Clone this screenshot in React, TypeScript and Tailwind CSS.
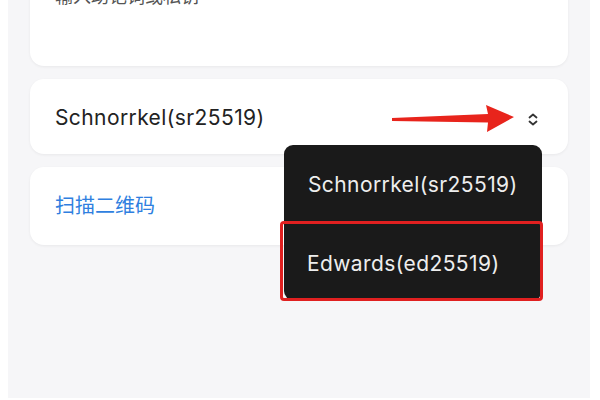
import React from "react";

const font = { fontFamily: "Inter, 'Noto Sans CJK SC', sans-serif" };

export default function App() {
  return (
    <div className="w-[600px] h-[400px] bg-white overflow-hidden relative" style={font}>
      <div className="mx-[8px] w-[582px] h-[398px] bg-[#f6f6f8] px-[22px] flex flex-col gap-[13px] overflow-hidden">
        <div className="-mt-[30px] h-[96px] bg-white rounded-[14px] shadow-[0_1px_3px_rgba(0,0,0,0.06)] px-[25px] pt-[16px]">
          <div className="text-[18px] leading-[22px] text-[#555]">输入助记词或私钥</div>
        </div>
        <div className="h-[75px] bg-white rounded-[14px] shadow-[0_1px_3px_rgba(0,0,0,0.06)] pl-[25px] pr-[30px] flex items-center justify-between">
          <span className="text-[21px] text-[#222] tracking-[0.4px] mt-[2px]">Schnorrkel(sr25519)</span>
          <svg width="10" height="13" viewBox="0 0 10 13" className="mt-[5px]">
            <path d="M1.5 4.5 L5 1.5 L8.5 4.5 M1.5 8.5 L5 11.5 L8.5 8.5" fill="none" stroke="#333" strokeWidth="1.8" strokeLinecap="round" strokeLinejoin="round" />
          </svg>
        </div>
        <div className="h-[78px] bg-white rounded-[14px] shadow-[0_1px_3px_rgba(0,0,0,0.06)] px-[25px] flex items-center">
          <span className="text-[20px] text-[#2f7fe0]">扫描二维码</span>
        </div>
      </div>

      <svg className="absolute left-[388px] top-[100px]" width="132" height="36" viewBox="0 0 132 36">
        <path d="M4 18 L100 14 L98 5 L126 17 L99 32 L100 22.5 L4 21 Z" fill="#e8241c" />
      </svg>

      <div className="absolute left-[284px] top-[145px] w-[258px] h-[155px] bg-[#1a1a1a] rounded-[9px] flex flex-col">
        <div className="h-[77px] flex items-center pl-[24px]">
          <span className="text-[21px] text-[#eee] tracking-[0.4px] mt-[2px]">Schnorrkel(sr25519)</span>
        </div>
      </div>
      <div className="absolute left-[280px] top-[221px] w-[263px] h-[80px] border-[3px] border-[#e02020] rounded-[4px] flex items-center pl-[24px]">
        <span className="text-[21px] text-[#eee] tracking-[0.4px] mt-[5px]">Edwards(ed25519)</span>
      </div>
    </div>
  );
}
